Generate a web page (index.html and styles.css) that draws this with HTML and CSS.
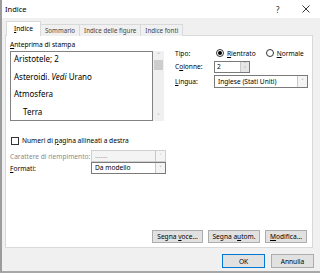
FILE: index.html
```html
<!DOCTYPE html>
<html>
<head lang="it">
    <meta charset="UTF-8">
    <link rel="stylesheet" href="styles.css">
    <title>Indice</title>
</head>
<body>
<div class="dialog">
    <div class="titlebar">
        <span class="title">Indice</span>
        <span class="help">?</span>
        <span class="close">
            <svg width="8" height="8" viewBox="0 0 8 8"><path d="M0.5 0.5L7.5 7.5M7.5 0.5L0.5 7.5" stroke="#222" stroke-width="0.9" fill="none"/></svg>
        </span>
    </div>

    <div class="content">
        <div class="tabs">
            <span class="tab active"><u>I</u>ndice</span>
            <span class="tab">Sommario</span>
            <span class="tab">Indice delle figure</span>
            <span class="tab">Indice fonti</span>
        </div>

        <div class="panel">
            <div class="toprow">
                <div class="previewcol">
                    <div class="caption"><u>A</u>nteprima di stampa</div>
                    <div class="preview">
                        <div class="previewlist">
                            <div class="item">Aristotele; 2</div>
                            <div class="item">Asteroidi. <i>Vedi</i> Urano</div>
                            <div class="item">Atmosfera</div>
                            <div class="item sub">Terra</div>
                        </div>
                        <div class="scrollbar">
                            <span class="arrow">&#708;</span>
                            <span class="thumb"></span>
                            <span class="track"></span>
                            <span class="arrow">&#709;</span>
                        </div>
                    </div>
                </div>

                <div class="options">
                    <span class="lbl">Tipo:</span>
                    <div class="radios">
                        <span class="radio checked"><span class="dot"></span><span><u>R</u>ientrato</span></span>
                        <span class="radio"><span class="dot"></span><span><u>N</u>ormale</span></span>
                    </div>
                    <span class="lbl">C<u>o</u>lonne:</span>
                    <div class="spin">
                        <span class="spinval">2</span>
                        <span class="spinbtns"><span>&#708;</span><span>&#709;</span></span>
                    </div>
                    <span class="lbl"><u>L</u>ingua:</span>
                    <div class="select wide">
                        <span class="selval">Inglese (Stati Uniti)</span>
                        <span class="selarrow">&#709;</span>
                    </div>
                </div>
            </div>

            <div class="check">
                <span class="box"></span><span>Numeri di <u>p</u>agina allineati a destra</span>
            </div>

            <div class="fields">
                <span class="lbl disabled">Carattere di riempimento:</span>
                <div class="select disabled">
                    <span class="selval">.......</span>
                    <span class="selarrow">&#709;</span>
                </div>
                <span class="lbl"><u>F</u>ormati:</span>
                <div class="select">
                    <span class="selval">Da modello</span>
                    <span class="selarrow">&#709;</span>
                </div>
            </div>

            <div class="panelbuttons">
                <button class="btn voce">Segna <u>v</u>oce...</button>
                <button class="btn autom">Segna a<u>u</u>tom.</button>
                <button class="btn modifica"><u>M</u>odifica...</button>
            </div>
        </div>

        <div class="footer">
            <button class="btn big default">OK</button>
            <button class="btn big">Annulla</button>
        </div>
    </div>
</div>
</body>
</html>
```

FILE: styles.css
```css
body {
    margin: 0;
    background: #f0f0f0;
    font-family: "Noto Sans", "Open Sans", sans-serif;
    font-size: 6.6px;
    color: #000;
    overflow: hidden;
}
u {
    text-decoration: underline;
}
.dialog {
    width: 320px;
    height: 273px;
    box-sizing: border-box;
    border-left: 2px solid #9c9c9c;
    border-bottom: 2px solid #a8a8a8;
    display: flex;
    flex-direction: column;
}
.titlebar {
    height: 18px;
    background: #fff;
    display: flex;
    align-items: center;
    padding-left: 3px;
}
.title {
    flex: 1;
    font-size: 7.5px;
}
.help {
    width: 26px;
    font-size: 8px;
    color: #222;
}
.close {
    width: 18px;
    display: flex;
}
.content {
    flex: 1;
    display: flex;
    flex-direction: column;
    padding: 4px 7px 0 3px;
}
.tabs {
    display: flex;
    align-items: flex-end;
    height: 14px;
    position: relative;
    z-index: 1;
    margin-bottom: -1px;
    padding-left: 1px;
}
.tab {
    height: 12px;
    line-height: 12px;
    padding: 0 4px;
    font-size: 6.2px;
    border: 1px solid #d9d9d9;
    border-left: none;
    border-bottom: none;
    background: #f0f0f0;
    color: #444;
    box-sizing: border-box;
    white-space: nowrap;
}
.tab.active {
    height: 15px;
    line-height: 14px;
    font-size: 6.6px;
    background: #fff;
    border-left: 1px solid #d9d9d9;
    color: #000;
    padding: 0 7px;
}
.panel {
    height: 213px;
    box-sizing: border-box;
    background: #fff;
    border: 1px solid #d9d9d9;
    padding: 3px 4px 4px 4px;
    display: flex;
    flex-direction: column;
}
.toprow {
    display: flex;
    gap: 11px;
}
.previewcol {
    width: 155px;
}
.caption {
    height: 11px;
    line-height: 11px;
    margin-bottom: 1px;
}
.preview {
    display: flex;
    height: 70px;
}
.previewlist {
    flex: 1;
    border: 1px solid #828282;
    padding: 1px 3px;
    font-size: 8px;
    overflow: hidden;
}
.item {
    height: 17.5px;
    line-height: 12px;
}
.item.sub {
    padding-left: 9px;
}
.scrollbar {
    width: 11px;
    background: #f0f0f0;
    display: flex;
    flex-direction: column;
    align-items: center;
}
.arrow {
    height: 9px;
    line-height: 9px;
    font-size: 7px;
    color: #606060;
}
.thumb {
    width: 9px;
    height: 10px;
    background: #cdcdcd;
}
.track {
    flex: 1;
}
.lbl {
    white-space: nowrap;
}
.options {
    flex: 1;
    display: grid;
    grid-template-columns: 39px 1fr;
    grid-template-rows: 12px 13px 14px;
    row-gap: 1px;
    align-items: center;
    margin-top: 8px;
}
.radios {
    display: flex;
    gap: 10px;
    padding-left: 2px;
}
.radio {
    display: flex;
    align-items: center;
    gap: 3px;
}
.dot {
    width: 8px;
    height: 8px;
    border: 1px solid #333;
    border-radius: 50%;
    box-sizing: border-box;
    position: relative;
}
.radio.checked .dot::after {
    content: "";
    position: absolute;
    left: 1px;
    top: 1px;
    width: 4px;
    height: 4px;
    border-radius: 50%;
    background: #000;
}
.spin {
    width: 36px;
    height: 12px;
    box-sizing: border-box;
    border: 1px solid #7a7a7a;
    display: flex;
}
.spinval {
    flex: 1;
    padding-left: 2px;
    line-height: 10px;
}
.spinbtns {
    width: 8px;
    display: flex;
    flex-direction: column;
    background: #e6e6e6;
    border-left: 1px solid #c8c8c8;
    font-size: 5px;
    line-height: 5px;
    text-align: center;
    color: #444;
}
.select {
    height: 12px;
    box-sizing: border-box;
    border: 1px solid #7a7a7a;
    display: flex;
    background: #fff;
}
.select.wide {
    width: 94px;
    height: 13px;
}
.selval {
    flex: 1;
    padding-left: 3px;
    line-height: 10px;
}
.select.wide .selval {
    line-height: 11px;
}
.selarrow {
    width: 9px;
    border-left: 1px solid #c8c8c8;
    background: #f4f4f4;
    font-size: 6px;
    text-align: center;
    line-height: 10px;
    color: #555;
}
.select.disabled {
    border-color: #cfcfcf;
    background: #f4f4f4;
}
.select.disabled .selval {
    color: #999;
}
.select.disabled .selarrow {
    color: #999;
}
.lbl.disabled {
    color: #8a8a8a;
}
.check {
    display: flex;
    align-items: center;
    gap: 3px;
    margin-top: 15px;
    height: 9px;
    padding-left: 1px;
}
.box {
    width: 8px;
    height: 8px;
    box-sizing: border-box;
    border: 1px solid #333;
}
.fields {
    display: grid;
    grid-template-columns: 81px 75px;
    grid-template-rows: 12px 12px;
    align-items: center;
    margin-top: 5px;
}
.panelbuttons {
    margin-top: auto;
    display: flex;
    justify-content: flex-end;
    gap: 5px;
    padding-right: 1px;
}
.btn {
    font-family: inherit;
    font-size: 6.6px;
    height: 13px;
    padding: 0;
    background: #e1e1e1;
    border: 1px solid #adadad;
    color: #000;
    line-height: 11px;
}
.btn.voce {
    width: 51px;
}
.btn.autom {
    width: 52px;
}
.btn.modifica {
    width: 42px;
}
.footer {
    display: flex;
    justify-content: flex-end;
    gap: 6px;
    padding-top: 6px;
    margin-right: -1px;
}
.btn.big {
    width: 43px;
    height: 14px;
}
.btn.default {
    border-color: #0078d7;
}
```
